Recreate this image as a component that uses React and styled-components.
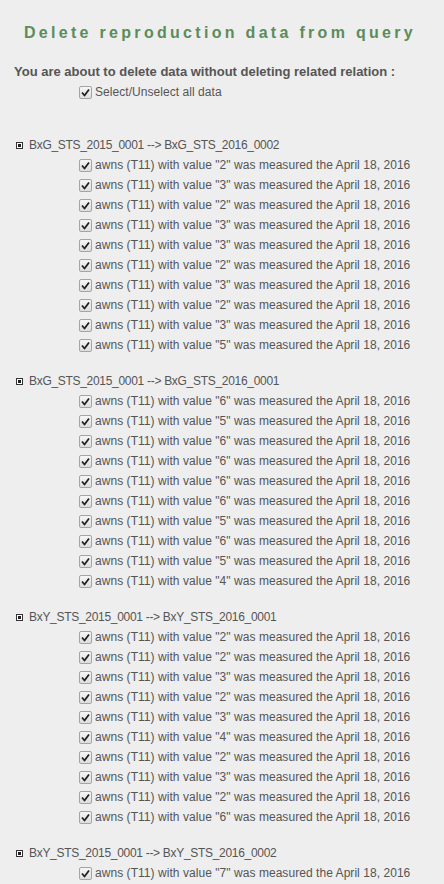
import React from 'react';
import styled, { createGlobalStyle } from 'styled-components';

const GlobalStyle = createGlobalStyle`
  html, body {
    margin: 0;
    padding: 0;
    background: #eeeeee;
  }
  body {
    font-family: 'Liberation Sans', Arial, sans-serif;
    font-size: 12px;
    color: #555555;
  }
`;

const Page = styled.div`
  padding: 0 14px 40px 14px;
`;

const Title = styled.h1`
  margin: 23px 0 0;
  padding-right: 4px;
  font-family: 'Liberation Sans', Arial, sans-serif;
  font-size: 16px;
  line-height: 20px;
  font-weight: bold;
  letter-spacing: 3.3px;
  white-space: nowrap;
  text-align: center;
  color: #5b8c5a;
`;

const Warning = styled.div`
  margin-top: 19px;
  line-height: 20px;
  font-weight: bold;
  font-size: 13px;
`;

const Row = styled.label`
  display: flex;
  align-items: center;
  gap: 3px;
  height: 20px;
  padding-left: ${(p) => p.indent || 0}px;
  letter-spacing: 0.05px;
`;

const Box = styled.span`
  display: inline-flex;
  align-items: center;
  justify-content: center;
  box-sizing: border-box;
  width: 13px;
  height: 13px;
  border: 1px solid #a4a4a4;
  border-radius: 2px;
  background: linear-gradient(#f6f6f6, #dedede);
`;

const Group = styled.div`
  margin-top: ${(p) => p.first ? 33 : 16}px;
`;

const Header = styled.div`
  display: flex;
  align-items: center;
  gap: 6px;
  height: 20px;
  padding-left: 2px;
  letter-spacing: -0.3px;
`;

const Bullet = styled.span`
  box-sizing: border-box;
  width: 7px;
  height: 7px;
  border: 1px solid #333;
  background: #fff;
  display: flex;
  align-items: center;
  justify-content: center;
  &::after {
    content: '';
    width: 3px;
    height: 3px;
    background: #222;
  }
`;

const Check = () => (
  <Box>
    <svg width="9" height="9" viewBox="0 0 9 9">
      <path d="M1 4.5 L3.5 7.5 L8 1.5" fill="none" stroke="#222" strokeWidth="1.8" strokeLinejoin="round" />
    </svg>
  </Box>
);

const groups = [
  { name: 'BxG_STS_2015_0001 --> BxG_STS_2016_0002', values: ['2', '3', '2', '3', '3', '2', '3', '2', '3', '5'] },
  { name: 'BxG_STS_2015_0001 --> BxG_STS_2016_0001', values: ['6', '5', '6', '6', '6', '6', '5', '6', '5', '4'] },
  { name: 'BxY_STS_2015_0001 --> BxY_STS_2016_0001', values: ['2', '2', '3', '2', '3', '4', '2', '3', '2', '6'] },
  { name: 'BxY_STS_2015_0001 --> BxY_STS_2016_0002', values: ['7'] },
];

export default function App() {
  return (
    <Page>
      <GlobalStyle />
      <Title>Delete reproduction data from query</Title>
      <Warning>You are about to delete data without deleting related relation :</Warning>
      <Row indent={65}>
        <Check />
        <span>Select/Unselect all data</span>
      </Row>
      {groups.map((g, i) => (
        <Group key={i} first={i === 0}>
          <Header>
            <Bullet />
            <span>{g.name}</span>
          </Header>
          {g.values.map((v, j) => (
            <Row key={j} indent={65}>
              <Check />
              <span>awns (T11) with value "{v}" was measured the April 18, 2016</span>
            </Row>
          ))}
        </Group>
      ))}
    </Page>
  );
}
